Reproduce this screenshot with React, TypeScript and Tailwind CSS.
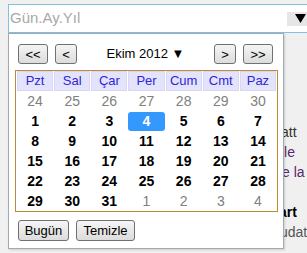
import React from "react";

const weekDays = ["Pzt", "Sal", "Çar", "Per", "Cum", "Cmt", "Paz"];

type Day = { n: number; other?: boolean; selected?: boolean };

const weeks: Day[][] = [
  [24, 25, 26, 27, 28, 29, 30].map((n) => ({ n, other: true })),
  [1, 2, 3, 4, 5, 6, 7].map((n) => ({ n, selected: n === 4 })),
  [8, 9, 10, 11, 12, 13, 14].map((n) => ({ n })),
  [15, 16, 17, 18, 19, 20, 21].map((n) => ({ n })),
  [22, 23, 24, 25, 26, 27, 28].map((n) => ({ n })),
  [
    { n: 29 },
    { n: 30 },
    { n: 31 },
    { n: 1, other: true },
    { n: 2, other: true },
    { n: 3, other: true },
    { n: 4, other: true },
  ],
];

function Btn({ children, className = "" }: { children: React.ReactNode; className?: string }) {
  return (
    <button
      className={
        "flex items-center justify-center border border-[#707070] rounded-[3px] bg-linear-to-b from-[#f5f5f5] to-[#dcdcdc] text-[13px] text-black leading-none " +
        className
      }
    >
      {children}
    </button>
  );
}

export default function App() {
  return (
    <div className="relative w-[307px] h-[253px] overflow-hidden bg-[#f0f0f0] font-['Liberation_Sans',Arial,sans-serif]">
      {/* date input */}
      <div className="ml-[8px] mt-[4px] h-[29px] w-[310px] border border-[#7ec3df] bg-white flex items-center">
        <span className="pl-[1px] text-[15px] text-[#a8a8a8]">Gün.Ay.Yıl</span>
        <span className="ml-auto mr-[9px] w-[21px] h-[14px] bg-[#e6e6e6] flex items-center justify-end pr-[2px]">
          <svg width="11" height="9" viewBox="0 0 11 9">
            <path d="M0 0 H11 L5.5 9 Z" fill="#000" />
          </svg>
        </span>
      </div>

      {/* page content behind the popup */}
      <div className="pt-[89px] text-[14px] leading-[20px]">
        <div className="pl-[281px] text-[#333]">att</div>
        <div className="pl-[281px] text-[#5a2a6a]">ile</div>
        <div className="pl-[282px] text-[#5a2a6a]">e la</div>
        <div className="h-[20px]" />
        <div className="pl-[279px] font-bold text-black">art</div>
        <div className="pl-[280px] text-[#555]">udat</div>
      </div>

      {/* calendar popup */}
      <div className="absolute left-[8px] top-[33px] w-[276px] h-[216px] border border-[#a3a9b3] bg-white shadow-[1px_1px_2px_rgba(0,0,0,0.15)]">
        <div className="ml-[9px] mr-[10px] mt-[10px] h-[20px] flex items-center">
          <div className="flex gap-[7px]">
            <Btn className="w-[30px] h-[20px]">&lt;&lt;</Btn>
            <Btn className="w-[22px] h-[20px]">&lt;</Btn>
          </div>
          <div className="flex-1 text-center text-[13px] text-black">Ekim 2012 ▼</div>
          <div className="flex gap-[7px]">
            <Btn className="w-[22px] h-[20px]">&gt;</Btn>
            <Btn className="w-[30px] h-[20px]">&gt;&gt;</Btn>
          </div>
        </div>

        <div className="ml-[6px] mr-[5px] mt-[6px] border border-[#bf8a36]">
          <table className="table-fixed w-full border-separate border-spacing-x-[1px] border-spacing-y-0">
            <thead>
              <tr>
                {weekDays.map((d) => (
                  <th
                    key={d}
                    className="h-[20px] p-0 bg-[#e3e3fb] border border-[#d8d8f6] text-[13px] font-normal text-[#2f25dc] leading-[18px]"
                  >
                    {d}
                  </th>
                ))}
              </tr>
            </thead>
            <tbody>
              {weeks.map((w, i) => (
                <tr key={i}>
                  {w.map((d, j) => (
                    <td key={j} className="h-[20px] p-0 text-center text-[14px]">
                      {d.selected ? (
                        <div className="mt-[1px] h-[19px] leading-[19px] rounded-[3px] bg-[#3399ff] text-white font-bold">
                          {d.n}
                        </div>
                      ) : (
                        <div
                          className={
                            d.other
                              ? "h-[20px] leading-[20px] text-[#808080]"
                              : "h-[20px] leading-[20px] font-bold text-black"
                          }
                        >
                          {d.n}
                        </div>
                      )}
                    </td>
                  ))}
                </tr>
              ))}
            </tbody>
          </table>
        </div>

        <div className="ml-[9px] mt-[8px] flex gap-[7px]">
          <Btn className="w-[51px] h-[21px]">Bugün</Btn>
          <Btn className="w-[59px] h-[21px]">Temizle</Btn>
        </div>
      </div>
    </div>
  );
}
